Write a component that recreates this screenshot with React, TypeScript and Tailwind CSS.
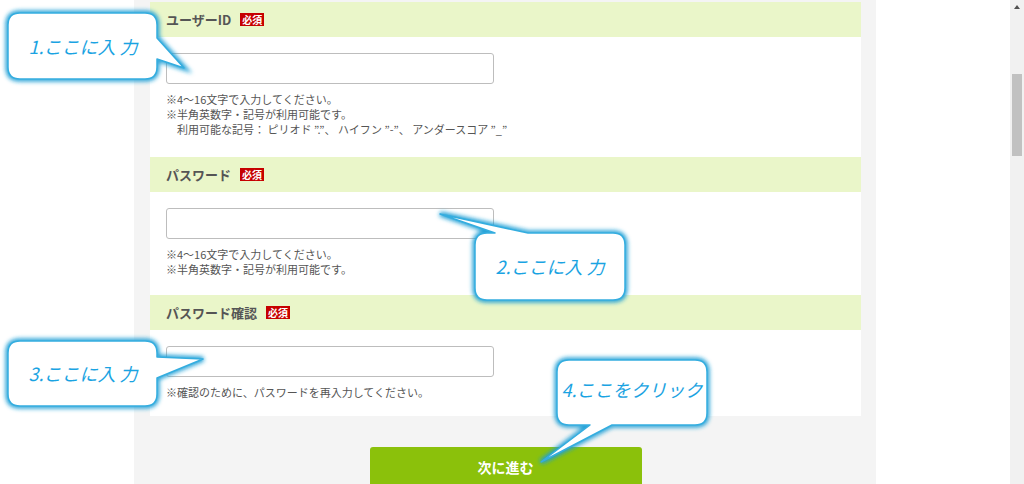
import React from "react";

const font = { fontFamily: '"Noto Sans CJK JP", "Noto Sans", sans-serif' };

type Field = {
  label: string;
  notes: string[];
  indentLast?: boolean;
  pb: string;
};

const fields: Field[] = [
  {
    label: "ユーザーID",
    notes: [
      "※4～16文字で入力してください。",
      "※半角英数字・記号が利用可能です。",
      "利用可能な記号： ピリオド ”.”、 ハイフン ”-”、 アンダースコア ”_”",
    ],
    indentLast: true,
    pb: "pb-[20px]",
  },
  {
    label: "パスワード",
    notes: ["※4～16文字で入力してください。", "※半角英数字・記号が利用可能です。"],
    pb: "pb-[18px]",
  },
  {
    label: "パスワード確認",
    notes: ["※確認のために、パスワードを再入力してください。"],
    pb: "pb-[16px]",
  },
];

const Required = () => (
  <span className="ml-[9px] inline-flex h-[13px] items-center bg-[#c60000] px-[2px] text-[10px] font-bold leading-none text-white">
    必須
  </span>
);

const FormField = ({ field }: { field: Field }) => (
  <div>
    <div className="flex h-[35px] items-center bg-[#eaf6c9] px-4">
      <span className="text-[13px] font-bold text-[#555]">{field.label}</span>
      <Required />
    </div>
    <div className={`px-4 pt-4 ${field.pb}`}>
      <input
        type="text"
        className="block h-[31px] w-[328px] rounded-[3px] border border-[#bdbdbd] bg-white"
      />
      <div className="mt-2 text-[11px] leading-[15px] text-[#555]">
        {field.notes.map((n, i) => (
          <p
            key={i}
            className={field.indentLast && i === field.notes.length - 1 ? "pl-[11px]" : ""}
          >
            {n}
          </p>
        ))}
      </div>
    </div>
  </div>
);

// speech bubbles drawn over the form
const bubbles = [
  "M20 13 H145 Q157 13 157 25 V38 L184 68 L157 59 V67 Q157 79 145 79 H20 Q8 79 8 67 V25 Q8 13 20 13 Z",
  "M487 233 H495 L440 214 L528 233 H613 Q625 233 625 245 V288 Q625 300 613 300 H487 Q475 300 475 288 V245 Q475 233 487 233 Z",
  "M20 341 H145 Q157 341 157 353 V357 L203 359 L157 378 V394 Q157 406 145 406 H20 Q8 406 8 394 V353 Q8 341 20 341 Z",
  "M569 360 H695 Q707 360 707 372 V413 Q707 425 695 425 H612 L541 462 L590 425 H569 Q557 425 557 413 V372 Q557 360 569 360 Z",
];

const labels = [
  { text: "1.ここに入 力", cls: "left-[8px] top-[13px] w-[150px] h-[66px]" },
  { text: "2.ここに入 力", cls: "left-[475px] top-[233px] w-[150px] h-[67px]" },
  { text: "3.ここに入 力", cls: "left-[8px] top-[341px] w-[150px] h-[65px]" },
  { text: "4.ここをクリック", cls: "left-[557px] top-[358px] w-[150px] h-[62px]" },
];

export default function App() {
  return (
    <div className="relative flex h-[484px] w-[1024px] overflow-hidden bg-white" style={font}>
      <div className="w-[134px] shrink-0" />
      <main className="w-[742px] shrink-0 bg-[#f4f4f4] pl-4 pr-[15px] pt-[2px]">
        <div className="bg-white">
          {fields.map((f) => (
            <FormField key={f.label} field={f} />
          ))}
        </div>
        <div className="mt-[31px] flex justify-center">
          <button className="h-[40px] w-[272px] rounded-[3px] bg-[#8bc10b] text-[14px] font-bold text-white">
            次に進む
          </button>
        </div>
      </main>
      <div className="flex-1" />
      <div className="relative w-[14px] shrink-0 bg-[#f1f1f1]">
        <svg className="absolute left-[3px] top-[4px]" width="8" height="6" viewBox="0 0 8 6">
          <path d="M4 1 L7 5 H1 Z" fill="#505050" />
        </svg>
        <div className="absolute left-[2px] top-[74px] h-[82px] w-[10px] bg-[#c1c1c1]" />
      </div>

      <svg className="pointer-events-none absolute inset-0" width="1024" height="484">
        <defs>
          <filter id="glow" x="-20%" y="-20%" width="140%" height="140%">
            <feGaussianBlur stdDeviation="2" />
          </filter>
        </defs>
        {bubbles.map((d, i) => (
          <g key={i}>
            <path d={d} fill="none" stroke="#1f9fd6" strokeWidth="5" filter="url(#glow)" />
            <path d={d} fill="#fff" stroke="#34addf" strokeWidth="1.5" strokeLinejoin="round" />
          </g>
        ))}
      </svg>
      {labels.map((l) => (
        <div
          key={l.text}
          className={`absolute flex items-center justify-center text-[18px] italic text-[#1aa3e2] ${l.cls}`}
        >
          {l.text}
        </div>
      ))}
    </div>
  );
}
